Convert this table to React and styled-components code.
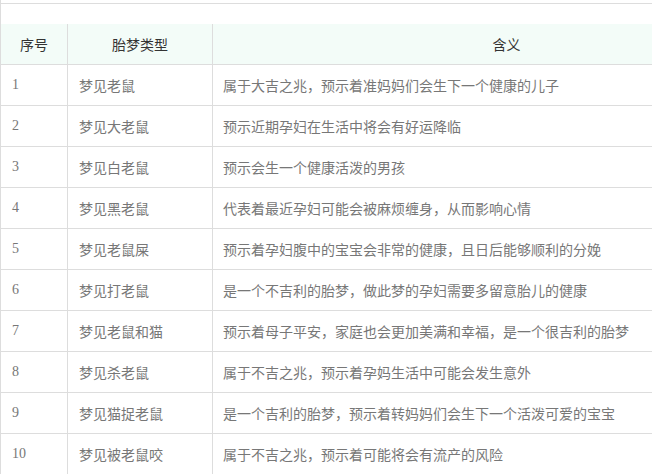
import React from "react";
import styled, { createGlobalStyle } from "styled-components";

const Global = createGlobalStyle`
  html, body { margin: 0; padding: 0; background: #fff; overflow: hidden; }
  body { font-family: "Noto Sans CJK SC", "Microsoft YaHei", sans-serif; }
`;

const Viewport = styled.div`
  width: 100%;
  height: 474px;
  overflow: hidden;
`;

const Wrapper = styled.div`
  width: 800px;
  border-left: 1px solid #dddddd;
  padding-top: 3px;
  min-height: 474px;
  box-sizing: border-box;
`;

const TopRule = styled.div`
  border-top: 1px solid #dddddd;
  height: 20px;
`;

const Row = styled.div`
  display: grid;
  grid-template-columns: 67px 145px 1fr;
  height: 41px;
  border-bottom: 1px solid #dddddd;
  box-sizing: border-box;
  background: ${(p) => (p.$head ? "#f3fcf8" : "#ffffff")};
`;

const Cell = styled.div`
  display: flex;
  align-items: center;
  justify-content: ${(p) => (p.$head ? "center" : "flex-start")};
  padding-left: ${(p) => (p.$head ? "0" : p.$pad || "11px")};
  border-right: 1px solid #dddddd;
  box-sizing: border-box;
  font-size: 14px;
  color: ${(p) => (p.$head ? "#333333" : "#777777")};
  font-family: ${(p) =>
    p.$num
      ? '"Liberation Serif", "Times New Roman", serif'
      : '"Noto Sans CJK SC", sans-serif'};
  white-space: nowrap;
  &:last-child { border-right: none; }
`;

const rows = [
  ["梦见老鼠", "属于大吉之兆，预示着准妈妈们会生下一个健康的儿子"],
  ["梦见大老鼠", "预示近期孕妇在生活中将会有好运降临"],
  ["梦见白老鼠", "预示会生一个健康活泼的男孩"],
  ["梦见黑老鼠", "代表着最近孕妇可能会被麻烦缠身，从而影响心情"],
  ["梦见老鼠屎", "预示着孕妇腹中的宝宝会非常的健康，且日后能够顺利的分娩"],
  ["梦见打老鼠", "是一个不吉利的胎梦，做此梦的孕妇需要多留意胎儿的健康"],
  ["梦见老鼠和猫", "预示着母子平安，家庭也会更加美满和幸福，是一个很吉利的胎梦"],
  ["梦见杀老鼠", "属于不吉之兆，预示着孕妈生活中可能会发生意外"],
  ["梦见猫捉老鼠", "是一个吉利的胎梦，预示着转妈妈们会生下一个活泼可爱的宝宝"],
  ["梦见被老鼠咬", "属于不吉之兆，预示着可能将会有流产的风险"],
];

export default function App() {
  return (
    <>
      <Global />
      <Viewport>
        <Wrapper>
          <TopRule />
          <Row $head>
            <Cell $head>序号</Cell>
            <Cell $head>胎梦类型</Cell>
            <Cell $head>含义</Cell>
          </Row>
          {rows.map(([type, meaning], i) => (
            <Row key={i}>
              <Cell $num>{i + 1}</Cell>
              <Cell>{type}</Cell>
              <Cell $pad="10px">{meaning}</Cell>
            </Row>
          ))}
        </Wrapper>
      </Viewport>
    </>
  );
}
